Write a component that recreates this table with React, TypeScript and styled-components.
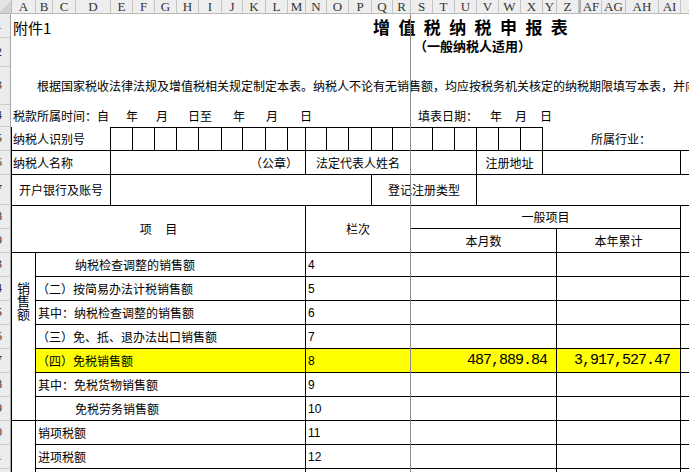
import React from 'react';
import styled, { createGlobalStyle } from 'styled-components';

const GlobalStyle = createGlobalStyle`
  html, body { margin: 0; padding: 0; background: #fff; }
  body {
    font-family: "Noto Sans CJK SC", "Noto Sans", sans-serif;
    font-size: 12px;
    color: #000;
  }
`;

const Page = styled.div`
  position: relative;
  width: 689px;
  height: 472px;
  overflow: hidden;
  background: #fff;
  display: flex;
  flex-direction: column;
`;

/* ---------- column header ---------- */
const ColBar = styled.div`
  flex: none;
  display: flex;
  height: 14px;
  background: #eeeeee;
  border-bottom: 1px solid #b9b9b9;
  box-sizing: border-box;
`;

const ColCell = styled.div<{ $w?: number; $gap?: boolean }>`
  ${p => (p.$w ? `flex: none; width: ${p.$w}px;` : 'flex: 1 0 30px;')}
  box-sizing: border-box;
  border-right: 1px solid #c4c4c4;
  ${p => (p.$gap ? 'border-left: 2px solid #b0b0b0;' : '')}
  text-align: center;
  font-family: "Liberation Serif", serif;
  font-size: 13px;
  line-height: 13px;
  color: #333;
  overflow: hidden;
  white-space: nowrap;
`;

const Corner = styled.div`
  flex: none;
  width: 12px;
  box-sizing: border-box;
  border-right: 1px solid #b9b9b9;
  background: linear-gradient(135deg, #e4e4e4 50%, #d2d2d2 50%);
`;

/* ---------- body ---------- */
const Body = styled.div`
  flex: 1;
  display: flex;
  min-height: 0;
`;

const RowHeads = styled.div`
  flex: none;
  width: 11px;
  display: flex;
  flex-direction: column;
  background: #ececec;
  border-right: 1px solid #a8a8a8;
  box-sizing: border-box;
  overflow: hidden;
`;

const RowHead = styled.div<{ $h: number }>`
  flex: none;
  height: ${p => p.$h}px;
  box-sizing: border-box;
  border-bottom: 1px solid #cdcdcd;
  overflow: hidden;
  display: flex;
  align-items: center;
  justify-content: flex-end;
  padding-right: 8px;
  font-family: "Liberation Serif", serif;
  font-size: 12px;
  color: #333;
  white-space: nowrap;
`;

const Sheet = styled.div`
  flex: 1;
  min-width: 0;
  display: flex;
  flex-direction: column;
  overflow: hidden;
`;

const Row = styled.div<{ $h: number }>`
  flex: none;
  display: flex;
  height: ${p => p.$h}px;
  width: 760px;
`;

type CellProps = {
  $w?: number;
  $h?: number;
  $bt?: boolean;
  $br?: boolean;
  $bb?: boolean;
  $bl?: boolean;
  $align?: 'left' | 'center' | 'right';
  $pl?: number;
  $pr?: number;
  $bg?: string;
  $valign?: 'top' | 'center';
};

const line = '1px solid #000';

const Cell = styled.div<CellProps>`
  ${p => (p.$w ? `flex: none; width: ${p.$w}px;` : 'flex: 1 0 auto;')}
  box-sizing: border-box;
  height: ${p => (p.$h ? `${p.$h}px` : '100%')};
  display: flex;
  align-items: ${p => (p.$valign === 'top' ? 'flex-start' : 'center')};
  justify-content: ${p =>
    p.$align === 'center' ? 'center' : p.$align === 'right' ? 'flex-end' : 'flex-start'};
  padding-left: ${p => p.$pl ?? 0}px;
  padding-right: ${p => p.$pr ?? 0}px;
  border-top: ${p => (p.$bt ? line : 'none')};
  border-right: ${p => (p.$br ? line : 'none')};
  border-bottom: ${p => (p.$bb ? line : 'none')};
  border-left: ${p => (p.$bl ? line : 'none')};
  background: ${p => p.$bg ?? 'transparent'};
  white-space: nowrap;
  line-height: 14px;
`;

const AttachText = styled.span`
  font-size: 15px;
  line-height: 16px;
  margin-top: 3px;
`;

const Title = styled.span`
  font-size: 17px;
  font-weight: 700;
  letter-spacing: 8.4px;
  line-height: 17px;
`;

const SubTitle = styled.span`
  font-size: 13px;
  font-weight: 700;
  line-height: 14px;
  margin-top: 1px;
`;

const Intro = styled.span`
  font-size: 12px;
`;

const Box = styled(Cell)`
  border-top: ${line};
  border-right: ${line};
  border-bottom: ${line};
`;

const HeadBlock = styled.div`
  flex: none;
  display: flex;
  height: 48px;
  width: 760px;
`;

const Group = styled.div<{ $w: number }>`
  flex: none;
  width: ${p => p.$w}px;
  display: flex;
  flex-direction: column;
`;

const SubRow = styled.div`
  display: flex;
  height: 24px;
  flex: none;
`;

const Block = styled.div`
  flex: none;
  display: flex;
  width: 760px;
`;

const BlockRows = styled.div`
  display: flex;
  flex-direction: column;
`;

const Side = styled.div<{ $h?: number }>`
  flex: none;
  width: 25px;
  ${p => (p.$h ? `height: ${p.$h}px;` : 'align-self: stretch; min-height: 60px;')}
  box-sizing: border-box;
  border-left: ${line};
  border-right: ${line};
  ${p => (p.$h ? `border-bottom: ${line};` : '')}
  display: flex;
  justify-content: center;
  padding-top: 29px;
`;

const SideText = styled.span`
  writing-mode: vertical-rl;
  font-size: 13px;
  line-height: 13px;
`;

const Num = styled.span`
  font-family: "Liberation Sans", sans-serif;
  font-size: 12px;
`;

const Money = styled.span`
  font-family: "Liberation Mono", monospace;
  font-size: 15px;
  letter-spacing: -1px;
`;

const FrozenLine = styled.div`
  position: absolute;
  left: 410px;
  top: 14px;
  bottom: 0;
  width: 1px;
  background: #8c8c8c;
  pointer-events: none;
`;

/* ---------- data ---------- */
const columns: [string, number][] = [
  ['A', 24], ['B', 17], ['C', 23], ['D', 35], ['E', 22], ['F', 22], ['G', 22], ['H', 22],
  ['I', 23], ['J', 21], ['K', 23], ['L', 22], ['M', 18], ['N', 21], ['O', 22], ['P', 23],
  ['Q', 21], ['R', 18], ['S', 22], ['T', 22], ['U', 22], ['V', 22], ['W', 22], ['X', 22],
  ['Y', 14], ['Z', 22], ['AF', 23], ['AG', 24], ['AH', 33], ['AI', 22],
];

const rowHeads: [string, number][] = [
  ['1', 24], ['2', 29], ['3', 38], ['4', 22], ['5', 24], ['6', 24], ['7', 30],
  ['8', 24], ['9', 24], ['13', 24], ['14', 24], ['15', 24], ['16', 24], ['17', 24],
  ['18', 24], ['19', 24], ['20', 24], ['21', 24], ['22', 24],
];

const idBoxes = [22, 22, 22, 22, 23, 21, 23, 22, 18, 21, 22, 23, 21, 18, 22, 22, 22, 22, 22, 22];

type DataRow = { label: string; pl: number; no: string; month?: string; year?: string; hi?: boolean };

const salesRows: DataRow[] = [
  { label: '纳税检查调整的销售额', pl: 39, no: '4' },
  { label: '（二）按简易办法计税销售额', pl: 1, no: '5' },
  { label: '其中：纳税检查调整的销售额', pl: 2, no: '6' },
  { label: '（三）免、抵、退办法出口销售额', pl: 1, no: '7' },
  { label: '（四）免税销售额', pl: 1, no: '8', month: '487,889.84', year: '3,917,527.47', hi: true },
  { label: '其中：免税货物销售额', pl: 2, no: '9' },
  { label: '免税劳务销售额', pl: 39, no: '10' },
];

const taxRows: DataRow[] = [
  { label: '销项税额', pl: 2, no: '11' },
  { label: '进项税额', pl: 2, no: '12' },
  { label: '', pl: 2, no: '' },
];

const DataLine: React.FC<{ r: DataRow }> = ({ r }) => {
  const bg = r.hi ? '#ffff00' : undefined;
  return (
    <Row $h={24}>
      <Cell $w={270} $br $bb $pl={r.pl} $bg={bg}>{r.label}</Cell>
      <Cell $w={105} $br $bb $pl={2} $bg={bg}><Num>{r.no}</Num></Cell>
      <Cell $w={146} $br $bb $align="right" $pr={9} $bg={bg}><Money>{r.month}</Money></Cell>
      <Cell $w={124} $br $bb $align="right" $pr={10} $bg={bg}><Money>{r.year}</Money></Cell>
      <Cell $bb />
    </Row>
  );
};

export default function App() {
  return (
    <Page>
      <GlobalStyle />
      <ColBar>
        <Corner />
        {columns.map(([c, w]) => (
          <ColCell key={c} $w={w} $gap={c === 'AF'}>{c}</ColCell>
        ))}
        <ColCell>AJ</ColCell>
      </ColBar>
      <Body>
        <RowHeads>
          {rowHeads.map(([n, h]) => (
            <RowHead key={n} $h={h}>{n}</RowHead>
          ))}
        </RowHeads>
        <Sheet>
          <Row $h={24}>
            <Cell $w={362} $pl={2}><AttachText>附件1</AttachText></Cell>
            <Cell><Title>增值税纳税申报表</Title></Cell>
          </Row>
          <Row $h={29}>
            <Cell $w={403} />
            <Cell $valign="top"><SubTitle>（一般纳税人适用）</SubTitle></Cell>
          </Row>
          <Row $h={38}>
            <Cell $pl={26}><Intro>根据国家税收法律法规及增值税相关规定制定本表。纳税人不论有无销售额，均应按税务机关核定的纳税期限填写本表，并向当地税务机关申报。</Intro></Cell>
          </Row>
          <Row $h={22}>
            <Cell $w={115} $pl={2}>税款所属时间：自</Cell>
            <Cell $w={30}>年</Cell>
            <Cell $w={32}>月</Cell>
            <Cell $w={45}>日至</Cell>
            <Cell $w={33}>年</Cell>
            <Cell $w={34}>月</Cell>
            <Cell $w={118}>日</Cell>
            <Cell $w={72}>填表日期：</Cell>
            <Cell $w={25}>年</Cell>
            <Cell $w={25}>月</Cell>
            <Cell>日</Cell>
          </Row>
          <Row $h={24}>
            <Cell $w={100} $bl $br $bb $pl={1}>纳税人识别号</Cell>
            {idBoxes.map((w, i) => (
              <Box key={i} $w={w} />
            ))}
            <Cell $bb $pl={48}>所属行业：</Cell>
          </Row>
          <Row $h={24}>
            <Cell $w={100} $bl $br $bb $pl={1}>纳税人名称</Cell>
            <Cell $w={195} $br $bb $align="right" $pr={7}>（公章）</Cell>
            <Cell $w={105} $br $bb $align="center">法定代表人姓名</Cell>
            <Cell $w={66} $br $bb />
            <Cell $w={66} $br $bb $align="center">注册地址</Cell>
            <Cell $w={138} $br $bb />
            <Cell $bb />
          </Row>
          <Row $h={30}>
            <Cell $w={100} $bl $br $align="center">开户银行及账号</Cell>
            <Cell $w={261} $br />
            <Cell $w={105} $br $align="center">登记注册类型</Cell>
            <Cell />
          </Row>
          <HeadBlock>
            <Cell $w={295} $bl $bt $br $bb $align="center">项&nbsp;&nbsp;&nbsp;&nbsp;&nbsp;目</Cell>
            <Cell $w={105} $bt $br $bb $align="center">栏次</Cell>
            <Group $w={270}>
              <Cell $h={24} $bt $br $bb $align="center">一般项目</Cell>
              <SubRow>
                <Cell $w={146} $br $bb $align="center">本月数</Cell>
                <Cell $w={124} $br $bb $align="center">本年累计</Cell>
              </SubRow>
            </Group>
            <Cell $bt $bb />
          </HeadBlock>
          <Block>
            <Side $h={168}><SideText>销售额</SideText></Side>
            <BlockRows>
              {salesRows.map(r => (
                <DataLine key={r.no} r={r} />
              ))}
            </BlockRows>
          </Block>
          <Block>
            <Side />
            <BlockRows>
              {taxRows.map((r, i) => (
                <DataLine key={i} r={r} />
              ))}
            </BlockRows>
          </Block>
        </Sheet>
      </Body>
      <FrozenLine />
    </Page>
  );
}
